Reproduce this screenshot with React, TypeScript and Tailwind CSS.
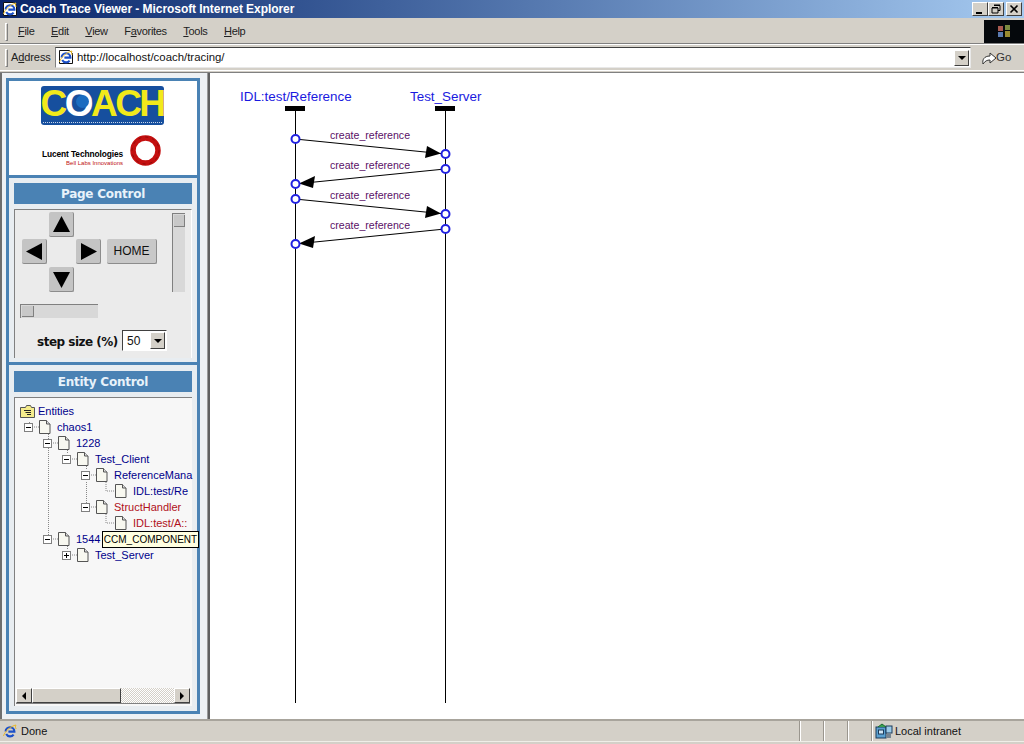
import { ReactNode } from "react";

const ui = "font-['Liberation_Sans',sans-serif]";

function IeGlyph() {
  return (
    <>
      <path d="M3.6 8.6a4.4 4.4 0 0 1 8.8 0H6.4M4.2 11a4.4 4.4 0 0 0 7.4.6" fill="none" stroke="#1c50c8" strokeWidth="2.1" />
      <path d="M1.5 13C3 8 9 3 14 2c-1 1.500-.5 3 .2 4" fill="none" stroke="#e8b828" strokeWidth="1" />
    </>
  );
}

function IeIcon() {
  return (
    <svg width="16" height="16" viewBox="0 0 16 16" className="shrink-0">
      <path d="M1.500 1.500h10l3 3v10h-13z" fill="#fff" stroke="#111" />
      <IeGlyph />
    </svg>
  );
}

function WinButton({ children }: { children: ReactNode }) {
  return (
    <div className="flex h-[14px] w-[16px] items-center justify-center bg-[#d4d0c8] border border-t-white border-l-white border-r-[#404040] border-b-[#404040]">
      {children}
    </div>
  );
}

function ArrowButton({ dir }: { dir: "up" | "down" | "left" | "right" }) {
  const pts = {
    up: "12.5,4 21,20 4,20",
    down: "12.5,21 21,5 4,5",
    left: "4,12.5 20,4 20,21",
    right: "21,12.5 5,4 5,21",
  }[dir];
  return (
    <div className="h-[25px] w-[25px] rounded-[2px] bg-[#c4c4c4] border-b border-r border-[#8c8c8c]">
      <svg width="25" height="25" viewBox="0 0 25 25">
        <polygon points={pts} fill="#000" />
      </svg>
    </div>
  );
}

function PageIcon() {
  return (
    <svg width="13" height="14" viewBox="0 0 13 14" className="shrink-0">
      <path d="M1.5.5h7l3.5 3.5v9.5H1.5z" fill="#f8f8f0" stroke="#555" />
      <path d="M8.5.5V4H12" fill="#ddd" stroke="#555" />
    </svg>
  );
}

function TreeBox({ plus }: { plus?: boolean }) {
  return (
    <div className="relative z-10 flex h-[9px] w-[9px] shrink-0 items-center justify-center border border-[#808080] bg-white">
      <div className="h-px w-[5px] bg-black" />
      {plus && <div className="absolute h-[5px] w-px bg-black" />}
    </div>
  );
}

type Node = { label: string; depth: number; red?: boolean; leaf?: boolean; plus?: boolean };

const nodes: Node[] = [
  { label: "chaos1", depth: 0 },
  { label: "1228", depth: 1 },
  { label: "Test_Client", depth: 2 },
  { label: "ReferenceMana", depth: 3 },
  { label: "IDL:test/Re", depth: 4, leaf: true },
  { label: "StructHandler", depth: 3, red: true },
  { label: "IDL:test/A::", depth: 4, leaf: true, red: true },
  { label: "1544", depth: 1 },
  { label: "Test_Server", depth: 2, plus: true },
];

function TreeRow({ node }: { node: Node }) {
  return (
    <div className="flex h-4 items-center" style={{ paddingLeft: node.depth * 19 }}>
      <div className="flex w-[14px] shrink-0 justify-start">{!node.leaf && <TreeBox plus={node.plus} />}</div>
      <PageIcon />
      <span className={`ml-[6px] whitespace-nowrap text-[11px] leading-4 ${node.red ? "text-[#b01020]" : "text-[#00008b]"}`}>
        {node.label}
      </span>
    </div>
  );
}

function Panel({ title, className, children }: { title: string; className: string; children: ReactNode }) {
  return (
    <div className={`flex flex-col border-[3px] border-t-0 border-[#4a82b4] bg-[#e8edf1] px-[5px] ${className}`}>
      <div className="flex h-[21px] shrink-0 items-center justify-center bg-[#4a82b4] pt-px text-[12px] font-bold tracking-[-0.25px] text-[#e8f2fa] font-['DejaVu_Sans',sans-serif]">
        {title}
      </div>
      {children}
    </div>
  );
}

function Diagram() {
  const msgs = [
    { y1: 139, y2: 154, right: true },
    { y1: 169, y2: 184, right: false },
    { y1: 199, y2: 214, right: true },
    { y1: 229, y2: 244, right: false },
  ];
  return (
    <svg width="812" height="646" viewBox="210 73 812 646" className="block">
      <g fontFamily="Liberation Sans, sans-serif">
        <text x="240" y="101" fontSize="13.4" fill="#1a1ae0">IDL:test/Reference</text>
        <text x="410" y="101" fontSize="13.4" fill="#1a1ae0">Test_Server</text>
        <rect x="285" y="106" width="20" height="5" fill="#000" />
        <rect x="435" y="106" width="20" height="5" fill="#000" />
        <line x1="295.5" y1="108" x2="295.5" y2="703" stroke="#000" />
        <line x1="445.5" y1="108" x2="445.5" y2="703" stroke="#000" />
        {msgs.map((m) => {
          const from = m.right ? 295 : 445;
          const to = m.right ? 445 : 295;
          const dir = m.right ? 1 : -1;
          const tipX = to - 4 * dir;
          const tipY = m.y2 - 0.4;
          const baseX = tipX - 15 * dir;
          const baseY = tipY - 1.5;
          return (
            <g key={m.y1}>
              <line x1={from} y1={m.y1} x2={tipX} y2={tipY} stroke="#000" />
              <polygon points={`${tipX},${tipY} ${baseX + 1},${baseY - 6} ${baseX - 1},${baseY + 6}`} fill="#000" />
              <text x="370" y={m.y1} fontSize="10.6" fill="#5a0f66" textAnchor="middle">create_reference</text>
              <circle cx={from + 0.5} cy={m.y1} r="4" fill="#fff" stroke="#2020e0" strokeWidth="2" />
              <circle cx={to + 0.5} cy={m.y2} r="4" fill="#fff" stroke="#2020e0" strokeWidth="2" />
            </g>
          );
        })}
      </g>
    </svg>
  );
}

export default function App() {
  return (
    <div className={`flex h-[744px] w-[1024px] flex-col overflow-hidden bg-[#d4d0c8] text-black ${ui}`}>
      {/* title bar */}
      <div className="flex h-[18px] shrink-0 items-center bg-gradient-to-r from-[#0a246a] to-[#a6caf0] pl-[2px] pr-[2px]">
        <IeIcon />
        <span className="ml-[2px] text-[12px] font-bold tracking-[-0.06px] text-white">
          Coach Trace Viewer - Microsoft Internet Explorer
        </span>
        <div className="ml-auto flex items-center">
          <WinButton>
            <div className="mt-[7px] mr-[2px] h-[2px] w-[6px] bg-black" />
          </WinButton>
          <WinButton>
            <svg width="10" height="10" viewBox="0 0 10 10">
              <path d="M3 1.5h6v5H7M1 4h6v5H1z" fill="none" stroke="#000" />
              <path d="M3 1h6M1 3.500h6" stroke="#000" />
            </svg>
          </WinButton>
          <div className="ml-[2px]">
            <WinButton>
              <svg width="10" height="10" viewBox="0 0 10 10">
                <path d="M1.500 1.500l7 7M8.500 1.500l-7 7" stroke="#000" strokeWidth="1.6" />
              </svg>
            </WinButton>
          </div>
        </div>
      </div>

      {/* menu bar */}
      <div className="mt-[2px] flex h-[24px] shrink-0 items-center border-b border-[#808080] pl-[5px]">
        <div className="h-[18px] w-[3px] border border-t-white border-l-white border-r-[#808080] border-b-[#808080]" />
        <div className="ml-[10px] flex gap-[16.5px] pb-px text-[11px] tracking-[-0.3px] text-[#222]">
          <span><u>F</u>ile</span>
          <span><u>E</u>dit</span>
          <span><u>V</u>iew</span>
          <span>F<u>a</u>vorites</span>
          <span><u>T</u>ools</span>
          <span><u>H</u>elp</span>
        </div>
        <div className="ml-auto flex h-[23px] w-[40px] items-center justify-center bg-[#05080c]">
          <svg width="16" height="15" viewBox="0 0 16 15">
            <rect x="2" y="2" width="5" height="5" fill="#a85a50" />
            <rect x="9" y="1" width="5" height="5" fill="#7a8a40" />
            <rect x="2" y="8" width="5" height="5" fill="#5a7ab0" />
            <rect x="9" y="7" width="5" height="6" fill="#9a8a30" />
          </svg>
        </div>
      </div>

      {/* address bar */}
      <div className="flex h-[26px] shrink-0 items-center border-t border-white pl-[5px]">
        <div className="h-[18px] w-[3px] border border-t-white border-l-white border-r-[#808080] border-b-[#808080]" />
        <span className="ml-[3px] w-[41px] whitespace-nowrap text-[11px] tracking-[-0.1px] text-[#222]">
          A<u>d</u>dress
        </span>
        <div className="ml-[3px] flex h-[21px] w-[916px] items-center justify-between bg-white border border-t-[#404040] border-l-[#808080] border-r-[#e8e8e8] border-b-[#e8e8e8]">
          <div className="flex items-center">
            <div className="ml-[2px]">
              <IeIcon />
            </div>
            <span className="ml-[3px] text-[11.4px] text-[#111]">http://localhost/coach/tracing/</span>
          </div>
          <div className="mr-px flex h-[16px] w-[15px] items-center justify-center border border-t-white border-l-white border-r-[#404040] border-b-[#404040] bg-[#d4d0c8]">
            <div className="h-0 w-0 border-x-[4px] border-t-[4px] border-x-transparent border-t-black" />
          </div>
        </div>
        <div className="ml-[10px] flex items-center">
          <svg width="17" height="17" viewBox="0 0 17 17">
            <path d="M2 15c-1-4 1-8 7-8V4l6 5-6 5v-3c-3 0-5 1-7 4z" fill="#fff" stroke="#333" />
          </svg>
          <span className="-ml-[2px] text-[11.5px] text-[#333]">Go</span>
        </div>
      </div>

      <div className="h-[3px] shrink-0 border-t border-white border-b border-b-[#808080]" />

      {/* frames */}
      <div className="flex h-[646px] shrink-0 bg-white">
        <div className="flex h-full w-[207px] shrink-0 flex-col border-l-[2px] border-[#6e6e6e] bg-[#eef1f4] pl-[4px] pr-[7px] pt-[5px]">
          {/* logos */}
          <div className="flex h-[100px] shrink-0 flex-col items-center border-[3px] border-[#4a82b4] bg-white pt-[5px] pr-[2px]">
            <div className="relative flex h-[39px] w-[123px] items-center justify-center rounded-[3px] bg-[#164f9e] pb-[5px]">
              <span className="text-[37px] leading-none font-bold tracking-[-2.5px] text-[#f2e91a]">
                C<span className="relative text-white">O<span className="absolute left-[11px] top-[12px] h-[13px] w-[13px] rounded-full bg-[#1b6cc0]" /></span>ACH
              </span>
              <div className="absolute bottom-[1px] left-[2px] right-[2px] h-[2px] border-t border-dotted border-[#c8d4e8]" />
            </div>
            <div className="mt-[9px] flex items-center">
              <div className="mr-[6px] flex flex-col items-end pt-[15px] leading-none">
                <span className="text-[8.400px] font-bold tracking-[-0.1px] text-black">Lucent Technologies</span>
                <span className="mt-px text-[6px] text-[#c01010]">Bell Labs Innovations</span>
              </div>
              <svg width="33" height="33" viewBox="0 0 33 33">
                <circle cx="16.500" cy="16.500" r="12.500" fill="none" stroke="#c40f0f" strokeWidth="5.500" />
                <circle cx="16.500" cy="16.500" r="13.500" fill="none" stroke="#8f0a0a" strokeWidth="1" strokeDasharray="3 4" />
              </svg>
            </div>
          </div>

          {/* page control */}
          <Panel title="Page Control" className="h-[187px] shrink-0 pt-[5px]">
            <div className="mt-[5px] flex h-[149px] flex-col border-t border-l border-t-[#808080] border-l-[#808080] border-r border-r-white bg-[#ebebeb] pl-[6px]">
              <div className="flex">
                <div className="mt-[2px] ml-[1px] grid grid-cols-[25px_25px_25px] gap-[2px]">
                  <div />
                  <ArrowButton dir="up" />
                  <div />
                  <ArrowButton dir="left" />
                  <div />
                  <ArrowButton dir="right" />
                  <div />
                  <ArrowButton dir="down" />
                  <div />
                </div>
                <div className="mt-[29px] ml-[6px] flex h-[25px] w-[50px] items-center justify-center rounded-[2px] bg-[#c8c8c8] border-b border-r border-[#8c8c8c] text-[12px] text-[#111]">
                  HOME
                </div>
                <div className="mt-[3px] ml-[15px] h-[79px] w-[13px] border-t border-l border-[#808080] bg-[#d8d8d8] p-px">
                  <div className="h-[12px] w-[11px] bg-[#c8c8c8] border-b border-r border-[#808080]" />
                </div>
              </div>
              <div className="-ml-px mt-[12px] h-[14px] w-[78px] border-t border-l border-[#808080] bg-[#d8d8d8] p-px">
                <div className="h-[11px] w-[12px] bg-[#c8c8c8] border-b border-r border-[#808080]" />
              </div>
              <div className="mt-[12px] flex items-center pl-[16px]">
                <span className="w-[85px] whitespace-nowrap pt-[3px] text-[12px] font-bold tracking-[-0.5px] text-[#111] font-['DejaVu_Sans',sans-serif]">
                  step size (%)
                </span>
                <div className="flex h-[21px] w-[45px] shrink-0 items-center justify-between border border-t-[#404040] border-l-[#404040] border-r-white border-b-white bg-white pl-[4px] pr-px">
                  <span className="text-[12px] text-[#111]">50</span>
                  <div className="flex h-[17px] w-[15px] items-center justify-center border border-t-white border-l-white border-r-[#404040] border-b-[#404040] bg-[#d4d0c8]">
                    <div className="h-0 w-0 border-x-[4px] border-t-[4px] border-x-transparent border-t-black" />
                  </div>
                </div>
              </div>
            </div>
          </Panel>

          {/* entity control */}
          <Panel title="Entity Control" className="h-[349px] shrink-0 pt-[6px] pb-[5px]">
            <div className="mt-[5px] flex min-h-0 flex-1 flex-col border-t border-l border-[#808080] bg-[#f7f7f7]">
              <div className="relative min-h-0 flex-1 pl-[10px] pt-[5px]">
                <svg width="100" height="160" className="absolute left-0 top-0" fill="none" stroke="#888" strokeDasharray="1 1">
                  <path d="M14.5 24v4M33.5 36v104M52.5 52v4M71.5 68v4M71.5 84v24M52.5 148v4" />
                  <path d="M15 29h10M34 45h9M53 61h10M72 77h9M72 109h9M91 84v9h9M91 116v9h9M34 141h9M53 157h10" />
                </svg>
                <div className="relative">
                  <div className="flex h-4 items-center">
                    <div className="-ml-[5px] flex h-[14px] w-[15px] items-end">
                      <svg width="15" height="13" viewBox="0 0 15 13">
                        <path d="M.5 2.5h5l1-2h4l1 2h3v10H.5z" fill="#f5ec8c" stroke="#555" />
                        <path d="M4 5.500h7M5.500 7.500h5.500M7 9.500h4" stroke="#222" />
                      </svg>
                    </div>
                    <span className="ml-[3px] text-[11px] leading-4 text-[#00008b]">Entities</span>
                  </div>
                  <div className="-ml-px">
                    {nodes.map((n) => (
                      <TreeRow key={n.label} node={n} />
                    ))}
                  </div>
                </div>
                {/* tooltip */}
                <div className="absolute left-[87px] top-[133px] z-20 flex h-[17px] w-[97px] items-center justify-center border border-black bg-[#ffffe1] text-[10px] whitespace-nowrap text-black">
                  CCM_COMPONENT
                </div>
              </div>
              <div className="mb-[2px] ml-px mr-[2px] flex h-[16px] shrink-0 border-b border-[#808080] bg-[repeating-conic-gradient(#d4d0c8_0%_25%,#ffffff_0%_50%)] bg-[length:2px_2px]">
                <div className="flex w-[16px] items-center justify-center border border-t-white border-l-white border-r-[#404040] border-b-[#404040] bg-[#d4d0c8]">
                  <div className="h-0 w-0 border-y-[4px] border-r-[4px] border-y-transparent border-r-black" />
                </div>
                <div className="w-[89px] border border-t-white border-l-white border-r-[#404040] border-b-[#404040] bg-[#d4d0c8]" />
                <div className="ml-auto flex w-[16px] items-center justify-center border border-t-white border-l-white border-r-[#404040] border-b-[#404040] bg-[#d4d0c8]">
                  <div className="h-0 w-0 border-y-[4px] border-l-[4px] border-y-transparent border-l-black" />
                </div>
              </div>
            </div>
          </Panel>
        </div>

        {/* frame divider */}
        <div className="h-full w-[3px] shrink-0 border-l border-r-2 border-l-[#9a9a9a] border-r-[#606060] bg-[#d4d0c8]" />
        <div className="min-w-0 flex-1 bg-white">
          <Diagram />
        </div>
      </div>

      {/* status bar */}
      <div className="flex h-[22px] shrink-0 items-center border-t-2 border-t-[#a8a49c] pl-[2px]">
        <svg width="16" height="16" viewBox="0 0 16 16" className="shrink-0">
          <IeGlyph />
        </svg>
        <span className="ml-[3px] text-[11px] text-[#111]">Done</span>
        <div className="ml-auto flex h-full items-stretch">
          <div className="w-[24px] border-l border-[#9a968e] shadow-[inset_1px_0_0_#fff]" />
          <div className="w-[24px] border-l border-[#9a968e] shadow-[inset_1px_0_0_#fff]" />
          <div className="w-[24px] border-l border-[#9a968e] shadow-[inset_1px_0_0_#fff]" />
          <div className="flex w-[153px] items-center border-l border-[#9a968e] pl-[3px] shadow-[inset_1px_0_0_#fff]">
            <svg width="18" height="17" viewBox="0 0 18 17" className="shrink-0">
              <rect x="1" y="4" width="10" height="11" fill="#5aa0d0" stroke="#1a3a5a" />
              <rect x="3.5" y="7" width="5" height="4" fill="#cfe6f5" stroke="#1a3a5a" />
              <rect x="11" y="3" width="6" height="7" fill="#9ccbe8" stroke="#1a3a5a" />
              <path d="M3 4l4-3 4 3" fill="#3aa050" stroke="#1a6a30" />
              <path d="M12 12h4M12 14h4" stroke="#1a3a5a" />
            </svg>
            <span className="ml-[2px] text-[11px] text-[#111]">Local intranet</span>
          </div>
        </div>
      </div>
      <div className="h-[3px] shrink-0 border-t border-[#f0eee8]" />
    </div>
  );
}
